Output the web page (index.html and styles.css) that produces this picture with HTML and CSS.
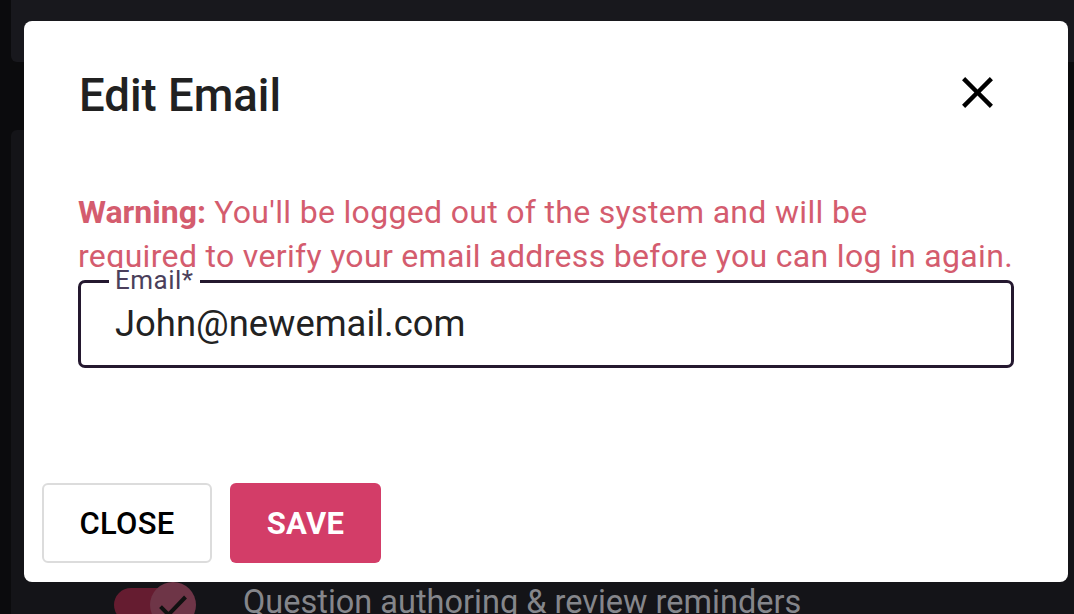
FILE: index.html
```html
<!DOCTYPE html>
<html>
<head>
<meta charset="utf-8">
<link rel="stylesheet" href="styles.css">
</head>
<body>
<div class="page">
  <div class="sidebar"></div>
  <div class="main">
    <div class="card card-top"></div>
    <div class="card card-body">
      <div class="pref-row">
        <div class="toggle">
          <div class="track"></div>
          <div class="thumb">
            <svg viewBox="0 0 24 24" width="40" height="40"><path d="M4.5 13 9.3 17.8 19.5 7.2" fill="none" stroke="#111" stroke-width="2.4"/></svg>
          </div>
        </div>
        <span class="pref-label">Question authoring &amp; review reminders</span>
      </div>
    </div>
  </div>
</div>

<div class="modal">
  <div class="modal-head">
    <h2 class="modal-title">Edit Email</h2>
    <button class="icon-btn" aria-label="close">
      <svg viewBox="0 0 24 24" width="53" height="53"><path d="M19 6.41 17.59 5 12 10.59 6.41 5 5 6.41 10.59 12 5 17.59 6.41 19 12 13.41 17.59 19 19 17.59 13.41 12z" fill="#000"/></svg>
    </button>
  </div>
  <div class="modal-content">
    <p class="warning"><strong>Warning:</strong> You'll be logged out of the system and will be<br>required to verify your email address before you can log in again.</p>
    <div class="field">
      <span class="field-label">Email*</span>
      <div class="field-value">John@newemail.com</div>
    </div>
  </div>
  <div class="modal-actions">
    <button class="btn btn-outline">CLOSE</button>
    <button class="btn btn-primary">SAVE</button>
  </div>
</div>
</body>
</html>
```

FILE: styles.css
```css
* { box-sizing: border-box; }
html, body {
  margin: 0;
  padding: 0;
  width: 1074px;
  height: 614px;
  overflow: hidden;
  background: #0b0b0d;
  font-family: Roboto, "Liberation Sans", sans-serif;
}
.page {
  display: flex;
  height: 614px;
}
.sidebar {
  width: 11px;
  flex: none;
  background: #0b0b0d;
}
.main {
  flex: 1;
  display: flex;
  flex-direction: column;
  gap: 68px;
}
.card {
  background: #18181d;
  border-radius: 6px;
  margin-right: -20px;
}
.card-top {
  height: 62px;
  flex: none;
  border-top-left-radius: 0;
  border-top-right-radius: 0;
}
.card-body {
  flex: 1;
  background: #141418;
  padding-top: 452px;
}
.pref-row {
  display: flex;
  align-items: flex-start;
  gap: 45px;
  padding-left: 103px;
}
.toggle {
  position: relative;
  width: 84px;
  height: 46px;
  flex: none;
}
.track {
  position: absolute;
  left: 0;
  top: 6px;
  width: 70px;
  height: 34px;
  border-radius: 17px;
  background: #651c30;
}
.thumb {
  position: absolute;
  left: 36px;
  top: 0;
  width: 46px;
  height: 46px;
  border-radius: 50%;
  background: #6e3547;
  display: flex;
  align-items: center;
  justify-content: center;
}
.pref-label {
  color: #85868b;
  font-size: 32.5px;
  line-height: 40px;
  white-space: nowrap;
}

.modal {
  position: absolute;
  left: 24px;
  top: 21px;
  width: 1044px;
  height: 561px;
  background: #fff;
  border-radius: 8px;
  display: flex;
  flex-direction: column;
}
.modal-head {
  display: flex;
  align-items: flex-start;
  justify-content: space-between;
  padding: 49px 64px 0 55px;
  height: 101px;
}
.modal-title {
  margin: 0;
  font-size: 45.5px;
  font-weight: 500;
  color: #212121;
  line-height: 52px;
}
.icon-btn {
  border: 0;
  background: none;
  padding: 0;
  margin-top: -4px;
  width: 53px;
  height: 53px;
  display: flex;
}
.modal-content {
  padding: 68px 54px 0 54px;
}
.warning {
  margin: 0;
  color: #d45c6e;
  font-size: 32px;
  line-height: 44px;
  letter-spacing: 0.32px;
  white-space: nowrap;
}
.warning strong {
  font-weight: 700;
  letter-spacing: 0;
}
.field {
  position: relative;
  margin-top: 2px;
  height: 88px;
  padding: 21px 34px 0 34px;
  border: 3px solid #24182f;
  border-radius: 7px;
}
.field-label {
  position: absolute;
  left: 28px;
  top: -15px;
  padding: 0 6px;
  background: #fff;
  font-size: 26px;
  line-height: 25px;
  color: #4b3f5b;
  letter-spacing: 0.5px;
}
.field-value {
  font-size: 36.4px;
  color: #222;
  line-height: 40px;
}
.modal-actions {
  margin-top: auto;
  display: flex;
  gap: 18px;
  padding: 0 0 19px 18px;
}
.btn {
  height: 80px;
  border-radius: 6px;
  font-family: Roboto, "Liberation Sans", sans-serif;
  font-size: 31px;
  font-weight: 500;
  letter-spacing: 0.3px;
  cursor: pointer;
}
.btn-outline {
  width: 170px;
  background: #fff;
  border: 2px solid #dcdcdc;
  color: #000;
}
.btn-primary {
  width: 151px;
  background: #d33d68;
  border: 0;
  color: #fff;
  font-weight: 700;
}
```
